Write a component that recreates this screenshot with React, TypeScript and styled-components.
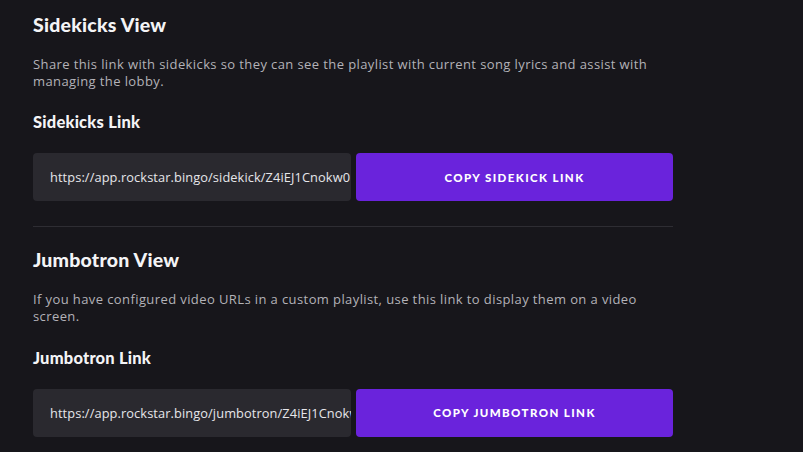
import React from "react";
import styled, { createGlobalStyle } from "styled-components";

const Global = createGlobalStyle`
  html, body { margin: 0; padding: 0; background: #17161b; }
  body { font-family: "Open Sans", "Noto Sans", sans-serif; }
`;

const Page = styled.div`
  width: 640px;
  padding: 13px 0 0 33px;
  display: flex;
  flex-direction: column;
`;

const Section = styled.section`
  display: flex;
  flex-direction: column;
`;

const Title = styled.h2`
  margin: 0;
  font-family: "Lato", sans-serif;
  font-weight: 900;
  font-size: 19.5px;
  line-height: 24px;
  letter-spacing: 0.2px;
  color: #f4f4f6;
`;

const Desc = styled.p`
  margin: 19px 0 0;
  font-family: "Open Sans", sans-serif;
  font-size: 13px;
  line-height: 17px;
  color: #b3b2b8;
  letter-spacing: 0.4px;
`;

const Label = styled.h3<{ $extra?: boolean }>`
  margin: ${(p) => (p.$extra ? "22.5px" : "22px")} 0 0;
  font-family: "Lato", sans-serif;
  font-weight: 900;
  font-size: 16.5px;
  line-height: 20px;
  letter-spacing: 0.2px;
  color: #f4f4f6;
`;

const Row = styled.div`
  margin-top: 21px;
  display: grid;
  grid-template-columns: 318px 317px;
  gap: 5px;
  height: 48px;
`;

const UrlBox = styled.div`
  background: #2a292f;
  border-radius: 4px;
  padding: 0 0 0 17px;
  display: flex;
  align-items: center;
  overflow: hidden;
  white-space: nowrap;
  font-family: "Open Sans", sans-serif;
  font-size: 12.8px;
  letter-spacing: 0.1px;
  color: #e6e6ea;
`;

const CopyButton = styled.button`
  background: #6a23dc;
  border: none;
  border-radius: 4px;
  color: #ffffff;
  font-family: "Lato", sans-serif;
  font-weight: 900;
  font-size: 11.5px;
  letter-spacing: 1.4px;
  text-transform: uppercase;
  cursor: pointer;
`;

const Divider = styled.hr`
  margin: 25px 0 21px;
  border: none;
  border-top: 1px solid #2e2d33;
  width: 640px;
`;

const LinkSection: React.FC<{
  title: string;
  desc: string;
  label: string;
  url: string;
  button: string;
  extra?: boolean;
}> = ({ title, desc, label, url, button, extra }) => (
  <Section>
    <Title>{title}</Title>
    <Desc>{desc}</Desc>
    <Label $extra={extra}>{label}</Label>
    <Row>
      <UrlBox>{url}</UrlBox>
      <CopyButton>{button}</CopyButton>
    </Row>
  </Section>
);

export default function App() {
  return (
    <>
      <Global />
      <Page>
        <LinkSection
          title="Sidekicks View"
          desc="Share this link with sidekicks so they can see the playlist with current song lyrics and assist with managing the lobby."
          label="Sidekicks Link"
          url="https://app.rockstar.bingo/sidekick/Z4iEJ1Cnokw0"
          button="Copy Sidekick Link"
        />
        <Divider />
        <LinkSection
          title="Jumbotron View"
          desc="If you have configured video URLs in a custom playlist, use this link to display them on a video screen."
          label="Jumbotron Link"
          url="https://app.rockstar.bingo/jumbotron/Z4iEJ1Cnokw0"
          button="Copy Jumbotron Link"
          extra
        />
      </Page>
    </>
  );
}
